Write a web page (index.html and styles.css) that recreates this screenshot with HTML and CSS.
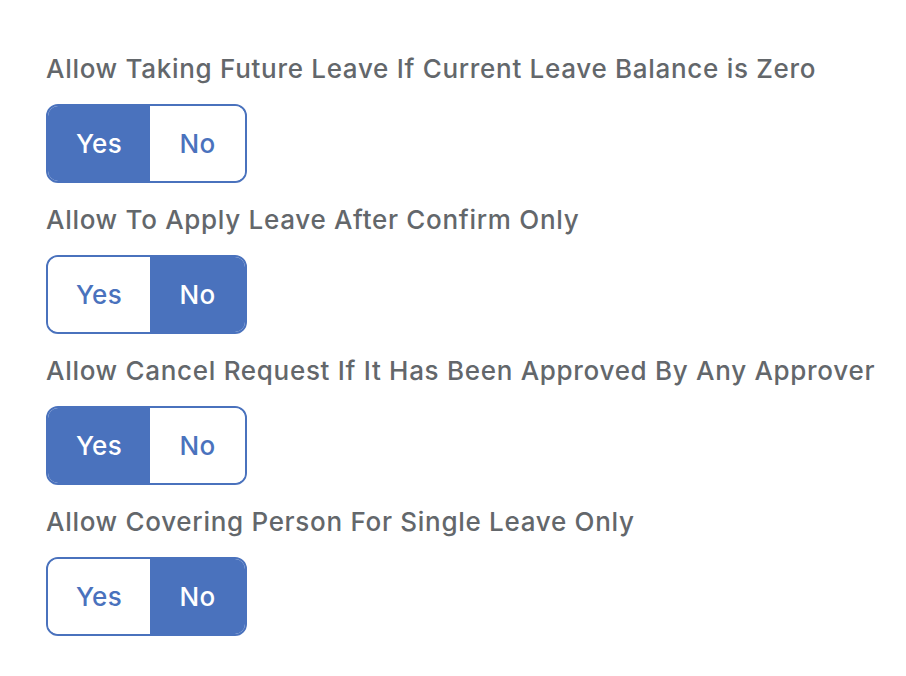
FILE: index.html
```html
<!DOCTYPE html>
<html>
<head>
<meta charset="utf-8">
<link rel="stylesheet" href="styles.css">
</head>
<body>
<div class="settings">
  <div class="setting">
    <div class="label">Allow Taking Future Leave If Current Leave Balance is Zero</div>
    <div class="toggle"><span class="opt on">Yes</span><span class="opt">No</span></div>
  </div>
  <div class="setting">
    <div class="label">Allow To Apply Leave After Confirm Only</div>
    <div class="toggle"><span class="opt">Yes</span><span class="opt on">No</span></div>
  </div>
  <div class="setting">
    <div class="label">Allow Cancel Request If It Has Been Approved By Any Approver</div>
    <div class="toggle"><span class="opt on">Yes</span><span class="opt">No</span></div>
  </div>
  <div class="setting">
    <div class="label">Allow Covering Person For Single Leave Only</div>
    <div class="toggle"><span class="opt">Yes</span><span class="opt on">No</span></div>
  </div>
</div>
</body>
</html>
```
FILE: styles.css
```css
html, body {
  margin: 0;
  background: #ffffff;
}
body {
  font-family: Inter, "Noto Sans", sans-serif;
}
.settings {
  padding: 53px 46px;
  display: flex;
  flex-direction: column;
  gap: 21px;
}
.setting {
  display: flex;
  flex-direction: column;
  gap: 20px;
}
.label {
  font-size: 26px;
  line-height: 31px;
  font-weight: 500;
  letter-spacing: 0.7px;
  color: #63676b;
  white-space: nowrap;
}
.toggle {
  display: flex;
  width: 201px;
  height: 79px;
  box-sizing: border-box;
  border: 2px solid #4a72bd;
  border-radius: 12px;
  overflow: hidden;
}
.opt {
  display: flex;
  align-items: center;
  justify-content: center;
  font-size: 26px;
  font-weight: 500;
  letter-spacing: 0.3px;
  color: #4a72bd;
  background: #ffffff;
}
.opt:first-child {
  width: 102px;
}
.opt:last-child {
  flex: 1;
}
.opt.on {
  background: #4a72bd;
  color: #ffffff;
}
```
